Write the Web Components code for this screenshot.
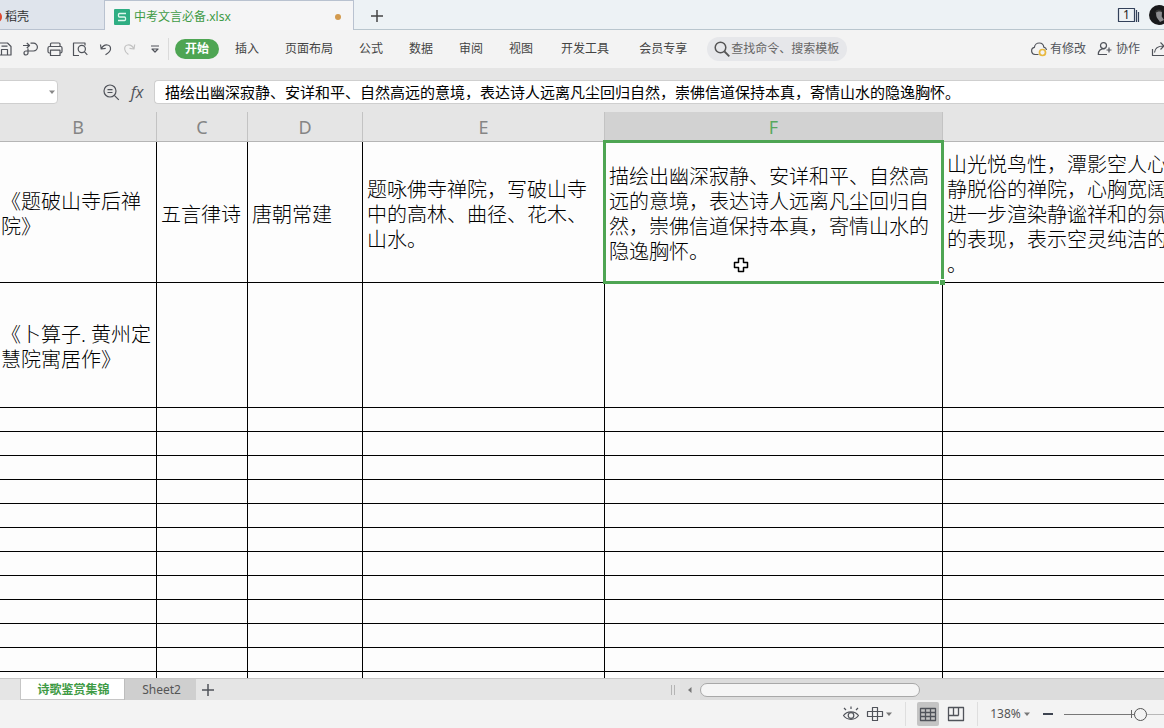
<!DOCTYPE html>
<html lang="zh-CN">
<head>
<meta charset="utf-8">
<meta name="viewport" content="width=device-width, initial-scale=1">
<title>中考文言必备.xlsx</title>
<style>
  html, body { margin: 0; height: 100%; }
  body {
    overflow: hidden;
    font-family: "Noto Sans", "Noto Sans CJK SC", sans-serif;
    font-size: 12px;
    line-height: 16px;
    color: #444;
    --green: #4ea553;
    --green-text: #3f9b46;
    --panel: #f3f3f3;
    --chrome: #e5e5e5;
    --icon: #50535a;
  }
</style>
</head>
<body>
<sheet-window></sheet-window>

<script>
const ICONS = {
  save: ['0 0 18 18', '<path d="M2 15V3h9.500l3.500 3.500V15H2zM5.500 15V9.500h6V15M5.500 6.200h6"/>'],
  output: ['0 0 18 18', '<path d="M2 5.500h6.300M5.800 3l2.700 2.500L5.800 8M9.500 3.200h3a3.900 3.900 0 0 1 0 7.800H5a2 2 0 1 0 2 2V8.500"/>'],
  print: ['0 0 18 18', '<path d="M4.500 6.500V4a1 1 0 0 1 1-1H13a1 1 0 0 1 1 1v2.500M4.500 13H3.500a1.500 1.500 0 0 1-1.500-1.500V8a1.500 1.500 0 0 1 1.500-1.500h11.500A1.500 1.500 0 0 1 16 8v3.500a1.500 1.500 0 0 1-1.500 1.500H14M4.500 10.200H14v5.300H4.500z"/>'],
  preview: ['0 0 18 18', '<path d="M8 15.500H2.500V3H14v2.500"/><circle cx="10.800" cy="9" r="3.600"/><path d="M13.300 11.700l3 3.200"/>'],
  undo: ['0 0 18 18', '<path d="M4.500 4.500l.7 4.500 4.500-.7M5.300 8.800C8.500 2.800 15 4.500 14.500 9.200c-.3 2.600-2.500 4-5 5.500"/>'],
  redo: ['0 0 18 18', '<path d="M13.700 4.500L13 9l-4.500-.7M12.900 8.800C9.700 2.800 3.200 4.500 3.700 9.200c.2 2.200 1.600 3.800 3.700 5.300"/>'],
  more: ['0 0 12 12', '<path d="M2 3h8M3 6l3 3 3-3z"/>'],
  search: ['0 0 18 18', '<circle cx="7.500" cy="7.500" r="5.300" stroke-width="1.500"/><path d="M11.500 11.500l4.800 4.800" stroke-width="1.800"/>'],
  cloud: ['0 0 18 18', '<path d="M8.500 14.500H5a3.600 3.600 0 0 1-.6-7.100C4.600 4.500 7 3 9.200 3c2.600 0 4.400 1.800 4.600 4.200 1.500.4 2.500 1.400 2.700 2.800"/><circle cx="12.500" cy="12.500" r="3" stroke="#e8b83f" stroke-width="1.700"/>'],
  person: ['0 0 18 18', '<circle cx="7.500" cy="5.600" r="3"/><path d="M9 8.700c-4 0-6.700 1.500-6.700 5.800H11M10.500 10h5M13 7.500v5"/>'],
  share: ['0 0 18 18', '<path d="M2.500 9v6.500h13V12M4.500 12.500C5 7.500 8 6 13.500 6M10.500 2.500L14 6l-3.500 3.500"/>'],
  plus: ['0 0 14 14', '<path d="M7 1v12M1 7h12" stroke-width="1.500"/>'],
  magnifier: ['0 0 18 18', '<circle cx="8" cy="8" r="6"/><path d="M12.300 12.300l4.500 4.500M5.500 6.700h5M5.500 9.500h5"/>'],
  eye: ['0 0 18 18', '<path d="M1.500 10.500C5 5.600 13 5.600 16.500 10.500 13 15.600 5 15.600 1.500 10.500z"/><circle cx="9" cy="10.500" r="2.800"/><path d="M9 1.500v2.500M2 3l2 2M16 3l-2 2"/>'],
  cross: ['0 0 18 18', '<path d="M6.500 2.500h5v13h-5zM1.500 6.500h15v5h-15z"/>'],
  grid: ['0 0 18 18', '<path d="M1.500 3.500h15v12h-15zM1.500 7.500h15M1.500 11.500h15M6.500 3.500v12M11.500 3.500v12" stroke-width="1.300"/>'],
  layout: ['0 0 18 18', '<path d="M1.500 2.500h15v13h-15zM6.500 2.500v8M11.500 2.500v8M1.500 10.500h10" stroke-width="1.300"/>'],
  caret: ['0 0 8 8', '<path d="M1 2.500h6L4 6z" fill="currentColor" stroke="none"/>'],
  left: ['0 0 8 8', '<path d="M5.500 1v6L2 4z" fill="currentColor" stroke="none"/>'],
  logo: ['0 0 16 16', '<rect width="16" height="16" rx="1" fill="#2fae83" stroke="none"/><path d="M12 4.500H5.500A1 1 0 0 0 4.500 5.500V7A1 1 0 0 0 5.500 8h5a1 1 0 0 1 1 1v1.500a1 1 0 0 1-1 1H4" stroke="#dff8ee" stroke-width="1.300"/>'],
  windows: ['0 0 24 16', '<path d="M1.500 1.500h16v13h-16zM19.500 3v12M21.500 5v10" stroke-width="1.200"/>'],
  avatar: ['0 0 20 20', '<circle cx="10" cy="10" r="10" fill="#19191b" stroke="none"/><path d="M7 7.500C7.500 5 12.500 4.800 13 7.500l-.3 4 2.300 3.500-4 2c-1-2-3.500-4-3.700-6z" fill="#8d8d90" stroke="none"/><path d="M6 8.500c0-5 7-5 7.500-1-2-1.500-5-1.300-7.500 1z" fill="#333" stroke="none"/>'],
  pointer: ['0 0 16 16', '<path d="M5.500 1.500h5v4h4v5h-4v4h-5v-4h-4v-5h4z" fill="#fff" stroke="#000" stroke-width="1.500"/>'],
};

class BaseElement extends HTMLElement {
  connectedCallback() {
    if (this.shadowRoot) return;
    this.attachShadow({ mode: 'open' }).innerHTML = this.template();
  }
}

class UiIcon extends BaseElement {
  template() {
    const [box, body] = ICONS[this.getAttribute('name')];
    const [, , w, h] = box.split(' ');
    return `<style>
      :host { display: block; flex: none; width: ${w}px; height: ${h}px; color: inherit; }
      svg { display: block; fill: none; stroke: currentColor; stroke-width: 1.2; stroke-linejoin: round; }
    </style><svg width="${w}" height="${h}" viewBox="${box}" aria-hidden="true">${body}</svg>`;
  }
}

const BUTTON_RESET = `
  button { margin: 0; padding: 0; border: 0; background: none; font: inherit; color: inherit; cursor: pointer;
           display: flex; align-items: center; justify-content: center; white-space: nowrap; }
`;

class ToolButton extends BaseElement {
  template() {
    const icon = this.getAttribute('icon');
    const label = this.getAttribute('label');
    return `<style>
      :host { display: flex; flex: none; color: var(--icon); }
      ${BUTTON_RESET}
      button { flex: 1; gap: 2px; }
      .label { color: #444; }
      :host([pressed]) button { background: #c4c4c4; border-radius: 2px; }
      :host([disabled]) { color: #c2c2c2; }
    </style>
    <button type="button" ${label ? `aria-label="${label}"` : ''} ${this.hasAttribute('disabled') ? 'disabled' : ''}>
      ${icon ? `<ui-icon name="${icon}"></ui-icon>` : ''}<slot></slot></button>`;
  }
}

class MenuTab extends BaseElement {
  template() {
    return `<style>
      :host { display: block; flex: none; }
      ${BUTTON_RESET}
      button { height: 20px; padding: 0 10px; border-radius: 10px; }
      :host([wide]) button { padding: 0 12px; }
      :host([active]) button { background: var(--green); color: #fff; font-weight: 700; }
    </style><button type="button" role="tab" aria-selected="${this.hasAttribute('active')}"><slot></slot></button>`;
  }
}

class TitleBar extends BaseElement {
  template() {
    return `<style>
      :host { display: flex; height: 30px; background: #edf2f5; box-shadow: inset 0 -1px #b9c6ce; }
      ${BUTTON_RESET}
      .tab { height: 30px; box-sizing: border-box; }
      .docer { width: 104px; background: #dfe4ec; border-bottom: 1px solid #b9c2d0; justify-content: flex-start; gap: 3px; overflow: hidden; padding-top: 4px; color: #333; }
      .flame { width: 8px; height: 10px; margin-left: -6px; border-radius: 50%; background: #e0492f; }
      .file { width: 250px; padding: 3px 12px 0 9px; background: #f5f5f6; border: solid #b9c2d0; border-width: 1px 1px 0; color: var(--green-text); gap: 4px; }
      .name { flex: 1; text-align: left; }
      .dot { width: 6px; height: 6px; border-radius: 50%; background: #d39a4e; }
      .add { margin-left: 16px; margin-top: 2px; color: #444; }
      .right { margin-left: auto; display: flex; align-items: center; gap: 8px; color: #33415a; }
      .windows { display: grid; }
      .windows > * { grid-area: 1 / 1; }
      .windows span { width: 19px; text-align: center; color: #222; }
      ui-icon[name=avatar] { margin-right: -5px; }
    </style>
    <button type="button" class="tab docer"><span class="flame"></span>稻壳</button>
    <button type="button" class="tab file"><ui-icon name="logo"></ui-icon><span class="name">中考文言必备.xlsx</span><span class="dot"></span></button>
    <tool-button class="add" icon="plus" label="新建"></tool-button>
    <div class="right">
      <button type="button" class="windows" aria-label="窗口"><ui-icon name="windows"></ui-icon><span>1</span></button>
      <ui-icon name="avatar"></ui-icon>
    </div>`;
  }
}

class RibbonBar extends BaseElement {
  template() {
    return `<style>
      :host { display: flex; align-items: center; height: 38px; background: var(--panel); overflow: hidden; }
      .quick { display: flex; align-items: center; gap: 7px; margin-left: -4px; }
      .quick tool-button { height: 20px; }
      .quick [icon=more] { margin: 0 3px; }
      .rule { width: 1px; height: 22px; background: #dadada; margin: 0 6px 0 4px; }
      nav { display: flex; gap: 6px; }
      .find { display: flex; align-items: center; height: 24px; width: 140px; box-sizing: border-box; padding: 0 6px; margin-left: 8px; border-radius: 12px; background: #e6e7ea; color: #555; }
      .find input { flex: 1; min-width: 0; border: 0; padding: 0; background: none; outline: 0; font: inherit; color: #555; }
      .find input::placeholder { color: #666; opacity: 1; }
      .right { display: flex; align-items: center; margin-left: auto; gap: 10px; }
      .right [icon=share] { margin-right: -4px; }
    </style>
    <div class="quick">
      <tool-button icon="save" label="保存"></tool-button>
      <tool-button icon="output" label="输出为PDF"></tool-button>
      <tool-button icon="print" label="打印"></tool-button>
      <tool-button icon="preview" label="打印预览"></tool-button>
      <tool-button icon="undo" label="撤消"></tool-button>
      <tool-button icon="redo" label="恢复" disabled></tool-button>
      <tool-button icon="more" label="更多"></tool-button>
    </div>
    <div class="rule"></div>
    <nav role="tablist">
      <menu-tab active>开始</menu-tab><menu-tab>插入</menu-tab><menu-tab>页面布局</menu-tab><menu-tab>公式</menu-tab>
      <menu-tab>数据</menu-tab><menu-tab>审阅</menu-tab><menu-tab>视图</menu-tab>
      <menu-tab wide>开发工具</menu-tab><menu-tab wide>会员专享</menu-tab>
    </nav>
    <label class="find"><ui-icon name="search"></ui-icon><input type="text" aria-label="查找" placeholder="查找命令、搜索模板"></label>
    <div class="right">
      <tool-button icon="cloud">有修改</tool-button>
      <tool-button icon="person">协作</tool-button>
      <tool-button icon="share" label="分享"></tool-button>
    </div>`;
  }
}

class FormulaBar extends BaseElement {
  template() {
    return `<style>
      :host { display: flex; align-items: center; height: 44px; padding-top: 4px; box-sizing: border-box; background: var(--chrome); }
      .box { display: flex; align-items: center; height: 24px; box-sizing: border-box; background: #fff; border: 1px solid #cfcfcf; border-radius: 4px; }
      .name { width: 62px; margin-left: -4px; padding-right: 1px; }
      .name tool-button { color: #888; }
      input { flex: 1; min-width: 0; border: 0; outline: 0; padding: 0; background: none; font: inherit; color: #000; }
      .zoom { margin-left: 44px; }
      .fx { margin: 0 9px; font: italic 16px/24px "Open Sans", sans-serif; width: 16px; color: #50535a; }
      .formula { flex: 1; border-right: 0; border-radius: 4px 0 0 4px; padding-left: 10px; font-size: 15px; }
    </style>
    <div class="box name"><input type="text" aria-label="名称框"><tool-button icon="caret" label="展开"></tool-button></div>
    <tool-button class="zoom" icon="magnifier" label="浏览公式结果"></tool-button>
    <tool-button class="fx" label="插入函数">fx</tool-button>
    <div class="box formula"><input type="text" aria-label="编辑栏" value="描绘出幽深寂静、安详和平、自然高远的意境，表达诗人远离凡尘回归自然，崇佛信道保持本真，寄情山水的隐逸胸怀。"></div>`;
  }
}

class SheetGrid extends BaseElement {
  template() {
    const empty = '<tr class="blank">' + '<td></td>'.repeat(6) + '</tr>';
    return `<style>
      :host { display: block; flex: 1; min-height: 0; overflow: hidden; background: #fdfdfd; }
      table { width: 100%; table-layout: fixed; border-collapse: separate; border-spacing: 0; }
      .b { width: 157px; } .c { width: 91px; } .d { width: 115px; } .e { width: 242px; } .f { width: 338px; }
      th { height: 30px; box-sizing: border-box; padding: 0; background: var(--chrome); color: #858585;
           border-right: 1px solid #c3c3c3; border-bottom: 1px solid #b5b5b5;
           font: 400 18px/24px "Noto Sans", "Open Sans", sans-serif; }
      th.on { background: #d2d2d2; color: #58a85e; }
      td { box-sizing: border-box; height: 24px; padding: 0 4px; border: solid #000; border-width: 0 1px 1px 0;
           font-size: 20px; line-height: 25px; font-weight: 300; color: #000; white-space: nowrap; }
      td:first-child { padding-left: 1px; }
      th:last-child, td:last-child { border-right: 0; }
      .poem td { height: 141px; padding-top: 4px; }
      .second td { height: 125px; padding-top: 4px; }
      .active { position: relative; }
      .frame { position: absolute; inset: -2px; border: 3px solid var(--green); pointer-events: none; }
      .frame::after { content: ""; position: absolute; right: -4px; bottom: -4px; width: 5px; height: 5px; background: var(--green); box-shadow: -1px -1px #fff; }
      .pointer { position: absolute; left: 128px; top: 115px; }
    </style>
    <table>
      <colgroup><col class="b"><col class="c"><col class="d"><col class="e"><col class="f"><col></colgroup>
      <thead><tr><th scope="col">B</th><th scope="col">C</th><th scope="col">D</th><th scope="col">E</th><th scope="col" class="on">F</th><th scope="col" aria-label="G"></th></tr></thead>
      <tbody>
        <tr class="poem">
          <td>《题破山寺后禅<br>院》</td><td>五言律诗</td><td>唐朝常建</td>
          <td>题咏佛寺禅院，写破山寺<br>中的高林、曲径、花木、<br>山水。</td>
          <td class="active">描绘出幽深寂静、安详和平、自然高<br>远的意境，表达诗人远离凡尘回归自<br>然，崇佛信道保持本真，寄情山水的<br>隐逸胸怀。<span class="frame"></span><ui-icon class="pointer" name="pointer"></ui-icon></td>
          <td>山光悦鸟性，潭影空人心<br>静脱俗的禅院，心胸宽阔<br>进一步渲染静谧祥和的氛<br>的表现，表示空灵纯洁的<br>。</td>
        </tr>
        <tr class="second"><td>《卜算子. 黄州定<br>慧院寓居作》</td><td></td><td></td><td></td><td></td><td></td></tr>
        ${empty.repeat(12)}
      </tbody>
    </table>`;
  }
}

class SheetTabs extends BaseElement {
  template() {
    return `<style>
      :host { display: flex; align-items: stretch; height: 22px; box-sizing: border-box; background: var(--chrome); border-top: 1px solid #c6c6c6; }
      ${BUTTON_RESET}
      .nav { width: 20px; border-right: 1px solid #c6c6c6; }
      .on { width: 103px; padding: 2px 0 0 2px; box-sizing: border-box; background: #fff; color: var(--green-text); font-weight: 700; border-bottom: 1px solid #c6c6c6; }
      .tab { width: 72px; padding-left: 2px; background: #cfcfcf; border-left: 1px solid #bdbdbd; color: #555; box-sizing: border-box; }
      .add { margin-left: 5px; }
      .scroll { width: 493px; margin-left: auto; display: flex; align-items: center; }
      .grip { width: 2px; height: 10px; border: solid #b5b5b5; border-width: 0 1px; margin-right: 5px; }
      .track { flex: 1; align-self: stretch; display: flex; align-items: center; background: #dcdcdc; }
      .arrow { width: 20px; align-self: stretch; background: #e2e2e2; color: #777; }
      .thumb { width: 220px; height: 14px; box-sizing: border-box; border: 1px solid #a8a8a8; border-radius: 7px; background: #f5f5f5; }
    </style>
    <div class="nav"></div>
    <button type="button" class="on">诗歌鉴赏集锦</button>
    <button type="button" class="tab">Sheet2</button>
    <tool-button class="add" icon="plus" label="新建工作表"></tool-button>
    <div class="scroll">
      <div class="grip"></div>
      <div class="track"><tool-button class="arrow" icon="left" label="向左滚动"></tool-button><div class="thumb"></div></div>
    </div>`;
  }
}

class StatusBar extends BaseElement {
  template() {
    return `<style>
      :host { display: flex; align-items: center; justify-content: flex-end; height: 28px; background: var(--panel); overflow: hidden; }
      .rule { width: 1px; height: 24px; background: #dedede; }
      .eye { margin-right: 6px; }
      .caret { margin: 0 12px 0 1px; color: #777; }
      .grid { width: 22px; height: 24px; margin: 0 8px 0 11px; }
      .layout { margin-right: 12px; }
      .pct { margin-left: 10px; width: 35px; color: #555; }
      .pc { margin-right: 12px; color: #777; }
      ${BUTTON_RESET}
      .minus { width: 10px; height: 16px; margin-right: 11px; }
      .minus::before { content: ""; width: 10px; height: 2px; background: #3d4450; }
      input { appearance: none; width: 100px; height: 16px; margin: 0; outline: 0;
        background: linear-gradient(#666, #666) 67px center / 1px 8px no-repeat,
                    linear-gradient(90deg, #777 76%, #b8b8b8 76%) center / 100% 1px no-repeat; }
      input::-webkit-slider-thumb { appearance: none; width: 13px; height: 13px; box-sizing: border-box; border: 1px solid #555; border-radius: 50%; background: #f3f3f3; }
    </style>
    <tool-button class="eye" icon="eye" label="护眼模式"></tool-button>
    <tool-button icon="cross" label="阅读模式"></tool-button>
    <ui-icon class="caret" name="caret"></ui-icon>
    <div class="rule"></div>
    <tool-button class="grid" icon="grid" label="普通视图" pressed></tool-button>
    <tool-button class="layout" icon="layout" label="分页预览"></tool-button>
    <div class="rule"></div>
    <button type="button" class="pct">138%</button>
    <ui-icon class="pc" name="caret"></ui-icon>
    <button type="button" class="minus" aria-label="缩小"></button>
    <input type="range" aria-label="显示比例" min="0" max="100" value="81">`;
  }
}

class SheetWindow extends BaseElement {
  template() {
    return `<style>
      :host { display: flex; flex-direction: column; height: 100vh; overflow: hidden; background: #fdfdfd; }
    </style>
    <title-bar></title-bar><ribbon-bar></ribbon-bar><formula-bar></formula-bar>
    <sheet-grid></sheet-grid><sheet-tabs></sheet-tabs><status-bar></status-bar>`;
  }
}

customElements.define('ui-icon', UiIcon);
customElements.define('tool-button', ToolButton);
customElements.define('menu-tab', MenuTab);
customElements.define('title-bar', TitleBar);
customElements.define('ribbon-bar', RibbonBar);
customElements.define('formula-bar', FormulaBar);
customElements.define('sheet-grid', SheetGrid);
customElements.define('sheet-tabs', SheetTabs);
customElements.define('status-bar', StatusBar);
customElements.define('sheet-window', SheetWindow);
</script>
</body>
</html>
